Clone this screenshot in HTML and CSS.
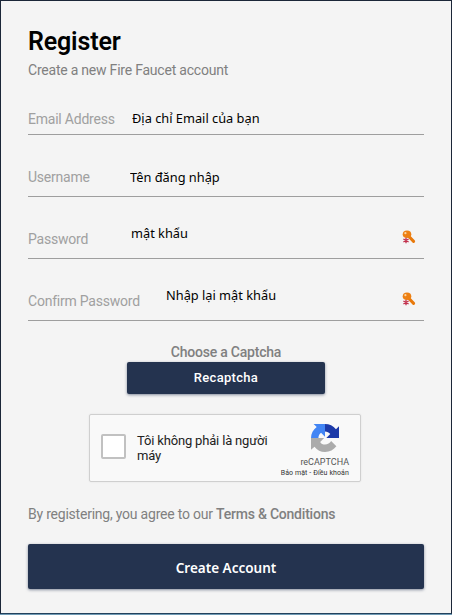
FILE: index.html
```
<!DOCTYPE html>
<html lang="vi">
<head>
    <meta charset="UTF-8">
    <meta name="viewport" content="width=device-width, initial-scale=1.0">
    <title>Register</title>
    <link rel="stylesheet" href="styles.css">
</head>
<body>
    <svg width="0" height="0" class="sprites">
        <symbol id="key" viewBox="0 0 14 14">
            <path d="M6 5.5L11.6 11.4" stroke="#e8790b" stroke-width="3" stroke-linecap="round"/>
            <ellipse cx="5" cy="4.2" rx="4.3" ry="3.8" fill="#ed8013"/>
            <circle cx="3.4" cy="3.2" r="1.1" fill="#fbd7a6"/>
            <path d="M4 8v5M1.7 9.2l4.6 2.6M6.3 9.2l-4.6 2.6" stroke="#f4f4f4" stroke-width="2.4"/>
            <path d="M4 7.7v5.6M1.4 9l5.2 3M6.6 9l-5.2 3" stroke="#c2304c" stroke-width="1.3"/>
        </symbol>
    </svg>

    <form class="card">
        <h1>Register</h1>
        <p class="subtitle">Create a new Fire Faucet account</p>

        <div class="field email">
            <label for="email">Email Address</label>
            <input type="text" id="email" value="Địa chỉ Email của bạn">
        </div>
        <div class="field username">
            <label for="username">Username</label>
            <input type="text" id="username" value="Tên đăng nhập">
        </div>
        <div class="field password">
            <label for="password">Password</label>
            <input type="text" id="password" value="mật khẩu">
            <svg class="key-icon"><use href="#key"/></svg>
        </div>
        <div class="field confirm">
            <label for="confirm">Confirm Password</label>
            <input type="text" id="confirm" value="Nhập lại mật khẩu">
            <svg class="key-icon"><use href="#key"/></svg>
        </div>

        <div class="captcha-title">Choose a Captcha</div>
        <button type="button" class="captcha-btn">Recaptcha</button>

        <div class="recaptcha">
            <span class="checkbox"></span>
            <span class="robot-text">Tôi không phải là người máy</span>
            <div class="brand">
                <svg class="logo" viewBox="0 0 64 64">
                    <path d="M64 32V5l-7 7C51 4 42 0 32 0v17c5 0 9 2 12 6l-9 9z" fill="#1c3aa9"/>
                    <path d="M32 0H6l7 7C5 13 0 22 0 32h17c0-5 2-9 6-12l9 9z" fill="#4285f4"/>
                    <path d="M0 32v27l8-7c6 8 14 12 24 12 11 0 20-5 26-13L46 39c-3 5-8 8-14 8-5 0-9-2-11-6l9-9z" fill="#ababab"/>
                </svg>
                <span class="brand-name">reCAPTCHA</span>
                <span class="brand-links">Bảo mật - Điều khoản</span>
            </div>
        </div>

        <p class="terms">By registering, you agree to our <b>Terms &amp; Conditions</b></p>
        <button type="button" class="submit-btn">Create Account</button>
    </form>
</body>
</html>
```
FILE: styles.css
```
* {
    box-sizing: border-box;
}
body {
    margin: 0;
    background-color: #6f9bb5;
    font-family: Roboto, sans-serif;
    font-size: 14px;
    letter-spacing: -0.22px;
    color: #808080;
}
.sprites {
    display: block;
}
.card {
    height: 614px;
    padding: 27px 27px 0;
    background-color: #f4f4f4;
    border: 1px solid #1b2638;
    border-bottom-color: #23415c;
}
h1 {
    margin: 0;
    font-size: 25px;
    line-height: 28px;
    font-weight: 600;
    letter-spacing: -0.15px;
    color: #000;
}
.subtitle {
    margin: 5px 0 0;
    line-height: 18px;
}
.field {
    display: flex;
    align-items: flex-start;
    height: 38px;
    margin-bottom: 24px;
    border-bottom: 1px solid #9e9e9e;
}
.field label {
    flex: none;
    padding-top: 9px;
    line-height: 18px;
    color: #a0a0a0;
}
.field input {
    flex: 1;
    min-width: 0;
    height: 20px;
    padding: 0;
    border: none;
    outline: none;
    background: none;
    font-family: "Noto Sans", sans-serif;
    font-size: 12.8px;
    color: #000;
}
.email {
    margin-top: 18px;
}
.email label {
    width: 104px;
    padding-top: 13px;
}
.email input {
    margin-top: 11px;
}
.username label {
    width: 102px;
}
.username input {
    margin-top: 8px;
}
.password label {
    width: 103px;
}
.password input {
    margin-top: 2px;
}
.confirm label {
    width: 138px;
}
.confirm input {
    margin-top: 2px;
}
.key-icon {
    width: 14px;
    height: 14px;
    margin: 9px 8px 0 0;
}
.captcha-title {
    text-align: center;
    font-weight: 500;
    line-height: 18px;
    margin-top: -2px;
}
button {
    display: block;
    padding: 0;
    border: none;
    border-radius: 2px;
    background-color: #24334f;
    color: #fff;
    box-shadow: 0 1px 3px rgba(20,35,70,0.5);
}
.captcha-btn {
    width: 198px;
    height: 32px;
    margin: 1px auto 0;
    padding-bottom: 2px;
    font-family: Roboto, sans-serif;
    font-size: 13px;
    font-weight: 500;
    letter-spacing: 0.3px;
}
.recaptcha {
    display: flex;
    width: 272px;
    height: 68px;
    margin: 20px 0 0 61px;
    background-color: #f9f9f9;
    border: 1px solid #cfcfcf;
    border-radius: 2px;
    box-shadow: 0 0 2px rgba(0,0,0,0.08);
}
.checkbox {
    flex: none;
    width: 25px;
    height: 25px;
    margin: 19px 11px 0 11px;
    background-color: #fff;
    border: 2px solid #c1c1c1;
    border-radius: 2px;
}
.robot-text {
    width: 140px;
    margin-top: 18px;
    font-size: 13px;
    line-height: 15px;
    letter-spacing: -0.17px;
    color: #222;
}
.brand {
    display: flex;
    flex-direction: column;
    align-items: flex-end;
    flex: 1;
    margin-right: 11px;
    white-space: nowrap;
    letter-spacing: 0;
    color: #555;
}
.logo {
    width: 28px;
    height: 28px;
    margin: 9px 10px 0 0;
}
.brand-name {
    margin-top: 4px;
    font-size: 9px;
    line-height: 12px;
}
.brand-links {
    font-size: 7px;
    line-height: 10px;
    letter-spacing: 0.1px;
    color: #333;
}
.terms {
    margin: 23px 0 0;
    line-height: 18px;
}
.terms b {
    font-weight: 500;
}
.submit-btn {
    width: 396px;
    height: 45px;
    margin-top: 21px;
    padding-top: 2px;
    font-family: "Noto Sans", sans-serif;
    font-size: 13.5px;
    font-weight: 600;
}
```
